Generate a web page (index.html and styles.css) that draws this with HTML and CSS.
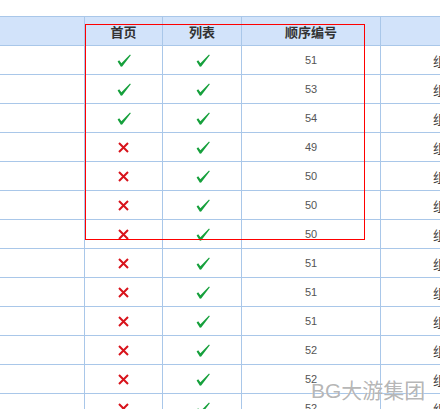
FILE: index.html
```html
<!DOCTYPE html>
<html lang="zh-CN">
<head>
    <meta charset="UTF-8">
    <meta name="viewport" content="width=device-width, initial-scale=1.0">
    <title>栏目列表</title>
    <link rel="stylesheet" href="styles.css">
</head>
<body>

    <div class="grid">
        <!-- Header row -->
        <div class="row head">
            <div class="cell c1"></div>
            <div class="cell c2">首页</div>
            <div class="cell c3">列表</div>
            <div class="cell c4">顺序编号</div>
            <div class="cell c5"></div>
        </div>

        <div class="row">
            <div class="cell c1"></div>
            <div class="cell c2"><svg class="yes" viewBox="0 0 14 13"><path d="M0.6 7.4 L2.2 6.3 L4.4 9.2 L13 0.4 L13.8 1.2 L5.2 12.4 L3.9 12.8 Z"/></svg></div>
            <div class="cell c3"><svg class="yes" viewBox="0 0 14 13"><path d="M0.6 7.4 L2.2 6.3 L4.4 9.2 L13 0.4 L13.8 1.2 L5.2 12.4 L3.9 12.8 Z"/></svg></div>
            <div class="cell c4 num">51</div>
            <div class="cell c5">组</div>
        </div>
        <div class="row">
            <div class="cell c1"></div>
            <div class="cell c2"><svg class="yes" viewBox="0 0 14 13"><path d="M0.6 7.4 L2.2 6.3 L4.4 9.2 L13 0.4 L13.8 1.2 L5.2 12.4 L3.9 12.8 Z"/></svg></div>
            <div class="cell c3"><svg class="yes" viewBox="0 0 14 13"><path d="M0.6 7.4 L2.2 6.3 L4.4 9.2 L13 0.4 L13.8 1.2 L5.2 12.4 L3.9 12.8 Z"/></svg></div>
            <div class="cell c4 num">53</div>
            <div class="cell c5">组</div>
        </div>
        <div class="row">
            <div class="cell c1"></div>
            <div class="cell c2"><svg class="yes" viewBox="0 0 14 13"><path d="M0.6 7.4 L2.2 6.3 L4.4 9.2 L13 0.4 L13.8 1.2 L5.2 12.4 L3.9 12.8 Z"/></svg></div>
            <div class="cell c3"><svg class="yes" viewBox="0 0 14 13"><path d="M0.6 7.4 L2.2 6.3 L4.4 9.2 L13 0.4 L13.8 1.2 L5.2 12.4 L3.9 12.8 Z"/></svg></div>
            <div class="cell c4 num">54</div>
            <div class="cell c5">组</div>
        </div>
        <div class="row">
            <div class="cell c1"></div>
            <div class="cell c2"><svg class="no" viewBox="0 0 11 11"><path d="M1 1 L10 10 M10 1 L1 10"/></svg></div>
            <div class="cell c3"><svg class="yes" viewBox="0 0 14 13"><path d="M0.6 7.4 L2.2 6.3 L4.4 9.2 L13 0.4 L13.8 1.2 L5.2 12.4 L3.9 12.8 Z"/></svg></div>
            <div class="cell c4 num">49</div>
            <div class="cell c5">组</div>
        </div>
        <div class="row">
            <div class="cell c1"></div>
            <div class="cell c2"><svg class="no" viewBox="0 0 11 11"><path d="M1 1 L10 10 M10 1 L1 10"/></svg></div>
            <div class="cell c3"><svg class="yes" viewBox="0 0 14 13"><path d="M0.6 7.4 L2.2 6.3 L4.4 9.2 L13 0.4 L13.8 1.2 L5.2 12.4 L3.9 12.8 Z"/></svg></div>
            <div class="cell c4 num">50</div>
            <div class="cell c5">组</div>
        </div>
        <div class="row">
            <div class="cell c1"></div>
            <div class="cell c2"><svg class="no" viewBox="0 0 11 11"><path d="M1 1 L10 10 M10 1 L1 10"/></svg></div>
            <div class="cell c3"><svg class="yes" viewBox="0 0 14 13"><path d="M0.6 7.4 L2.2 6.3 L4.4 9.2 L13 0.4 L13.8 1.2 L5.2 12.4 L3.9 12.8 Z"/></svg></div>
            <div class="cell c4 num">50</div>
            <div class="cell c5">组</div>
        </div>
        <div class="row">
            <div class="cell c1"></div>
            <div class="cell c2"><svg class="no" viewBox="0 0 11 11"><path d="M1 1 L10 10 M10 1 L1 10"/></svg></div>
            <div class="cell c3"><svg class="yes" viewBox="0 0 14 13"><path d="M0.6 7.4 L2.2 6.3 L4.4 9.2 L13 0.4 L13.8 1.2 L5.2 12.4 L3.9 12.8 Z"/></svg></div>
            <div class="cell c4 num">50</div>
            <div class="cell c5">组</div>
        </div>
        <div class="row">
            <div class="cell c1"></div>
            <div class="cell c2"><svg class="no" viewBox="0 0 11 11"><path d="M1 1 L10 10 M10 1 L1 10"/></svg></div>
            <div class="cell c3"><svg class="yes" viewBox="0 0 14 13"><path d="M0.6 7.4 L2.2 6.3 L4.4 9.2 L13 0.4 L13.8 1.2 L5.2 12.4 L3.9 12.8 Z"/></svg></div>
            <div class="cell c4 num">51</div>
            <div class="cell c5">组</div>
        </div>
        <div class="row">
            <div class="cell c1"></div>
            <div class="cell c2"><svg class="no" viewBox="0 0 11 11"><path d="M1 1 L10 10 M10 1 L1 10"/></svg></div>
            <div class="cell c3"><svg class="yes" viewBox="0 0 14 13"><path d="M0.6 7.4 L2.2 6.3 L4.4 9.2 L13 0.4 L13.8 1.2 L5.2 12.4 L3.9 12.8 Z"/></svg></div>
            <div class="cell c4 num">51</div>
            <div class="cell c5">组</div>
        </div>
        <div class="row">
            <div class="cell c1"></div>
            <div class="cell c2"><svg class="no" viewBox="0 0 11 11"><path d="M1 1 L10 10 M10 1 L1 10"/></svg></div>
            <div class="cell c3"><svg class="yes" viewBox="0 0 14 13"><path d="M0.6 7.4 L2.2 6.3 L4.4 9.2 L13 0.4 L13.8 1.2 L5.2 12.4 L3.9 12.8 Z"/></svg></div>
            <div class="cell c4 num">51</div>
            <div class="cell c5">组</div>
        </div>
        <div class="row">
            <div class="cell c1"></div>
            <div class="cell c2"><svg class="no" viewBox="0 0 11 11"><path d="M1 1 L10 10 M10 1 L1 10"/></svg></div>
            <div class="cell c3"><svg class="yes" viewBox="0 0 14 13"><path d="M0.6 7.4 L2.2 6.3 L4.4 9.2 L13 0.4 L13.8 1.2 L5.2 12.4 L3.9 12.8 Z"/></svg></div>
            <div class="cell c4 num">52</div>
            <div class="cell c5">组</div>
        </div>
        <div class="row">
            <div class="cell c1"></div>
            <div class="cell c2"><svg class="no" viewBox="0 0 11 11"><path d="M1 1 L10 10 M10 1 L1 10"/></svg></div>
            <div class="cell c3"><svg class="yes" viewBox="0 0 14 13"><path d="M0.6 7.4 L2.2 6.3 L4.4 9.2 L13 0.4 L13.8 1.2 L5.2 12.4 L3.9 12.8 Z"/></svg></div>
            <div class="cell c4 num">52</div>
            <div class="cell c5">组</div>
        </div>
        <div class="row">
            <div class="cell c1"></div>
            <div class="cell c2"><svg class="no" viewBox="0 0 11 11"><path d="M1 1 L10 10 M10 1 L1 10"/></svg></div>
            <div class="cell c3"><svg class="yes" viewBox="0 0 14 13"><path d="M0.6 7.4 L2.2 6.3 L4.4 9.2 L13 0.4 L13.8 1.2 L5.2 12.4 L3.9 12.8 Z"/></svg></div>
            <div class="cell c4 num">52</div>
            <div class="cell c5">组</div>
        </div>
    </div>

    <!-- Red highlight box drawn over the table -->
    <div class="highlight"></div>

    <div class="watermark">BG大游集团</div>

</body>
</html>
```

FILE: styles.css
```css
body {
    margin: 0;
    padding: 16px 0 0 0;
    background-color: #fff;
    font-family: 'Liberation Sans', 'Noto Sans CJK SC', sans-serif;
    color: #333;
    overflow: hidden;
    width: 440px;
    height: 409px;
    position: relative;
}

.grid {
    width: 520px;
}

.row {
    display: flex;
    height: 28px;
    border-bottom: 1px solid #a9c7e9;
}

/* Header row: light blue band */
.row.head {
    border-top: 1px solid #a9c7e9;
    background-color: #d2e3fa;
    font-weight: bold;
    font-size: 13px;
    color: #333;
}

.cell {
    box-sizing: border-box;
    border-right: 1px solid #a9c7e9;
    display: flex;
    align-items: center;
    justify-content: center;
}

.c1 { width: 85px; }
.c2 { width: 78px; }
.c3 { width: 79px; }
.c4 { width: 139px; }
.c5 {
    flex: 1;
    justify-content: flex-start;
    padding-left: 52px;
    font-size: 13px;
    color: #444;
    border-right: none;
}

.head .c5 { padding-left: 0; }

.num {
    font-size: 11px;
    color: #555;
}

.yes {
    width: 14px;
    height: 13px;
    margin-left: 1px;
}

.yes path {
    fill: #16a03c;
}

.no {
    width: 11px;
    height: 11px;
}

.no path {
    stroke: #d8131b;
    stroke-width: 2;
    fill: none;
}

/* Red box over the first three columns */
.highlight {
    position: absolute;
    left: 85px;
    top: 24px;
    width: 278px;
    height: 214px;
    border: 1px solid #f00;
}

.watermark {
    position: absolute;
    left: 311px;
    top: 374px;
    font-size: 21px;
    color: rgba(140, 140, 140, 0.65);
    text-shadow: 0 0 1px #fff;
    white-space: nowrap;
}
```
